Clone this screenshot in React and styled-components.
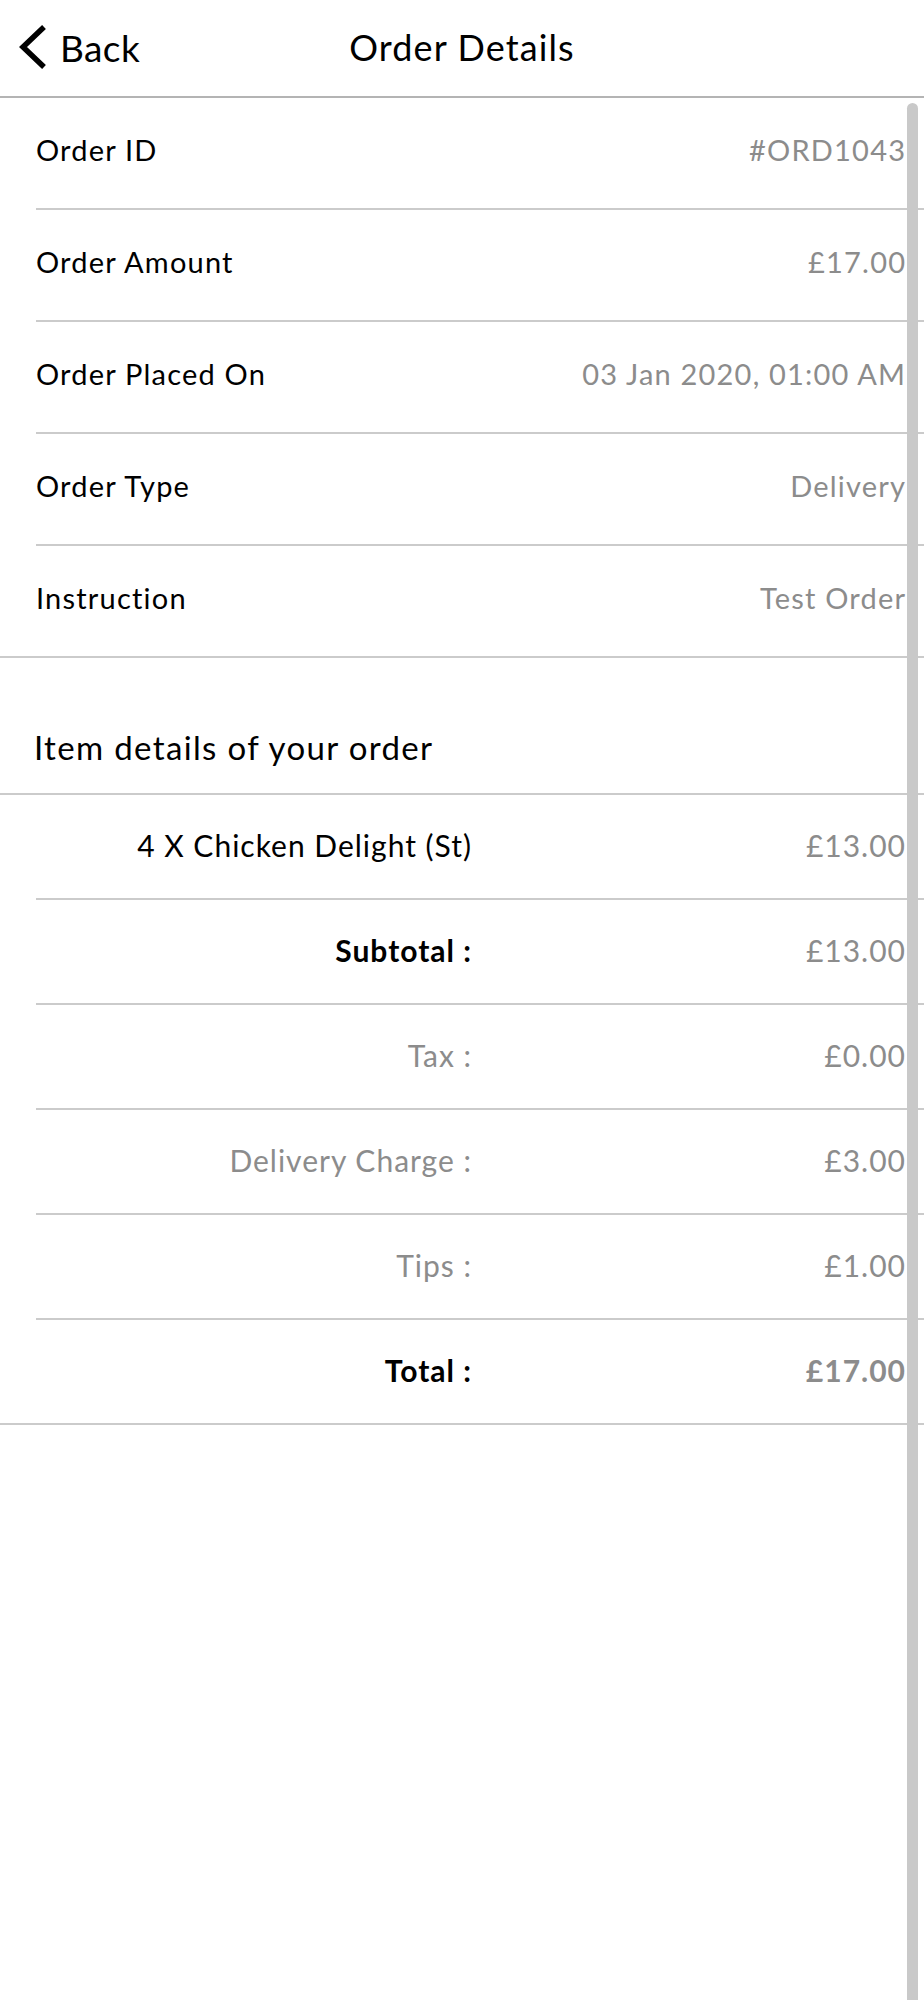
import React from "react";
import styled, { createGlobalStyle } from "styled-components";

const Global = createGlobalStyle`
  html, body { margin: 0; padding: 0; background: #fff; }
  body { font-family: Lato, "Noto Sans", "Liberation Sans", sans-serif; color: #000; }
  * { box-sizing: border-box; }
`;

const Page = styled.div`
  position: relative;
  width: 924px;
  min-height: 2000px;
  background: #fff;
`;

const Header = styled.header`
  height: 98px;
  display: grid;
  grid-template-columns: 1fr auto 1fr;
  align-items: center;
  border-bottom: 2px solid #b4b4b4;
  padding-bottom: 2px;
`;

const BackButton = styled.button`
  justify-self: start;
  display: flex;
  align-items: center;
  gap: 12px;
  border: none;
  background: none;
  padding: 0 0 0 18px;
  font-family: inherit;
  font-size: 37px;
  letter-spacing: 0.4px;
  color: #000;
  cursor: pointer;
`;

const Title = styled.h1`
  margin: 0;
  font-size: 36px;
  font-weight: 400;
  letter-spacing: 1.1px;
`;

const InfoRow = styled.div`
  height: 112px;
  margin-left: ${(p) => (p.$full ? "0" : "36px")};
  padding: 0 19px 8px ${(p) => (p.$full ? "36px" : "0")};
  display: flex;
  align-items: center;
  justify-content: space-between;
  border-bottom: 2px solid #cbcbcb;
  font-size: 29px;
  letter-spacing: 1.2px;
`;

const Label = styled.span`
  color: #000;
`;

const Value = styled.span`
  color: #8c8c8c;
  margin-right: -1.2px;
`;

const SectionTitle = styled.h2`
  margin: 0;
  height: 137px;
  padding: 0 0 26px 34px;
  display: flex;
  align-items: flex-end;
  font-size: 33px;
  font-weight: 400;
  letter-spacing: 1.35px;
  border-bottom: 2px solid #cbcbcb;
`;

const ItemRow = styled.div`
  height: 105px;
  margin-left: ${(p) => (p.$full ? "0" : "36px")};
  padding: 0 19px 4px ${(p) => (p.$full ? "36px" : "0")};
  display: grid;
  grid-template-columns: 435px 1fr;
  align-items: center;
  border-bottom: 2px solid #cbcbcb;
  font-size: 30px;
  letter-spacing: 1px;
`;

const ItemLabel = styled.span`
  text-align: right;
  margin-right: -1px;
  color: ${(p) => (p.$muted ? "#8c8c8c" : "#000")};
  font-weight: ${(p) => (p.$bold ? 700 : 400)};
`;

const ItemValue = styled.span`
  text-align: right;
  margin-right: -1px;
  color: #8c8c8c;
  font-weight: ${(p) => (p.$bold ? 700 : 400)};
`;

const ScrollThumb = styled.div`
  position: absolute;
  right: 6px;
  top: 103px;
  bottom: 0;
  width: 11px;
  border-radius: 6px 6px 0 0;
  background: #c9c9c9;
`;

const info = [
  ["Order ID", "#ORD1043"],
  ["Order Amount", "£17.00"],
  ["Order Placed On", "03 Jan 2020, 01:00 AM"],
  ["Order Type", "Delivery"],
  ["Instruction", "Test Order"],
];

const items = [
  { label: "4 X Chicken Delight (St)", value: "£13.00" },
  { label: "Subtotal :", value: "£13.00", bold: true },
  { label: "Tax :", value: "£0.00", muted: true },
  { label: "Delivery Charge :", value: "£3.00", muted: true },
  { label: "Tips :", value: "£1.00", muted: true },
  { label: "Total :", value: "£17.00", bold: true, boldValue: true },
];

export default function App() {
  return (
    <Page>
      <Global />
      <Header>
        <BackButton>
          <svg width="30" height="46" viewBox="0 0 30 46" aria-hidden="true">
            <polyline
              points="26,3 5,23 26,43"
              fill="none"
              stroke="#000"
              strokeWidth="5.5"
              strokeLinejoin="miter"
            />
          </svg>
          Back
        </BackButton>
        <Title>Order Details</Title>
        <span />
      </Header>
      {info.map(([l, v], i) => (
        <InfoRow key={l} $full={i === info.length - 1}>
          <Label>{l}</Label>
          <Value>{v}</Value>
        </InfoRow>
      ))}
      <SectionTitle>Item details of your order</SectionTitle>
      {items.map((it, i) => (
        <ItemRow key={it.label} $full={i === items.length - 1}>
          <ItemLabel $bold={it.bold} $muted={it.muted}>
            {it.label}
          </ItemLabel>
          <ItemValue $bold={it.boldValue}>{it.value}</ItemValue>
        </ItemRow>
      ))}
      <ScrollThumb />
    </Page>
  );
}
